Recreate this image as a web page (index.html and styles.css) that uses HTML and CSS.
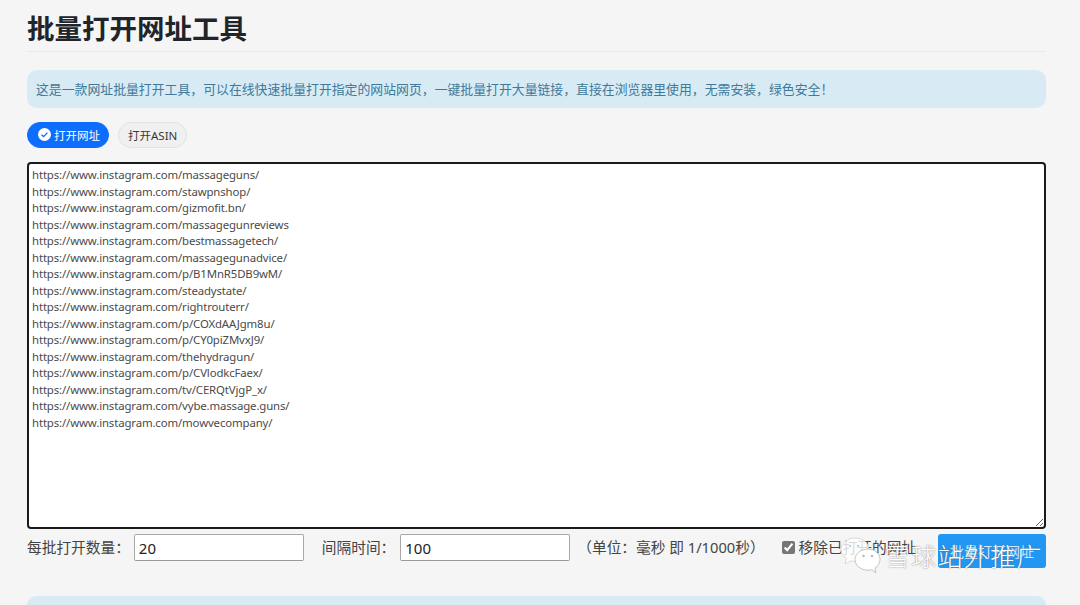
FILE: index.html
```html
<!DOCTYPE html>
<html lang="zh-CN">
<head>
<meta charset="utf-8">
<title>批量打开网址工具</title>
<link rel="stylesheet" href="styles.css">
</head>
<body>
<main class="page">
  <h1 class="title">批量打开网址工具</h1>
  <div class="alert">这是一款网址批量打开工具，可以在线快速批量打开指定的网站网页，一键批量打开大量链接，直接在浏览器里使用，无需安装，绿色安全！</div>
  <div class="tabs">
    <span class="pill pill-active">
      <svg class="check" viewBox="0 0 16 16" width="13" height="13"><circle cx="8" cy="8" r="8" fill="#fff"/><path d="M4.4 8.2l2.5 2.4 4.7-4.9" fill="none" stroke="#0d6efd" stroke-width="1.7"/></svg>
      打开网址
    </span>
    <span class="pill">打开ASIN</span>
  </div>
  <textarea class="urls" spellcheck="false">https://www.instagram.com/massageguns/
https://www.instagram.com/stawpnshop/
https://www.instagram.com/gizmofit.bn/
https://www.instagram.com/massagegunreviews
https://www.instagram.com/bestmassagetech/
https://www.instagram.com/massagegunadvice/
https://www.instagram.com/p/B1MnR5DB9wM/
https://www.instagram.com/steadystate/
https://www.instagram.com/rightrouterr/
https://www.instagram.com/p/COXdAAJgm8u/
https://www.instagram.com/p/CY0piZMvxJ9/
https://www.instagram.com/thehydragun/
https://www.instagram.com/p/CVlodkcFaex/
https://www.instagram.com/tv/CERQtVjgP_x/
https://www.instagram.com/vybe.massage.guns/
https://www.instagram.com/mowvecompany/</textarea>
  <div class="controls">
    <label class="field">每批打开数量：<input class="num num-first" type="text" value="20"></label>
    <label class="field field-gap">间隔时间：<input class="num num-second" type="text" value="100"></label>
    <span class="unit">（单位：毫秒 即 1/1000秒）</span>
    <label class="remove"><input class="tick" type="checkbox" checked>移除已打开的网址</label>
    <button class="go">批量打开网址</button>
  </div>
  <div class="alert alert-bottom"></div>
</main>
<div class="watermark">
  <svg class="wechat" viewBox="0 0 42 37" width="42" height="37">
    <path d="M15 1C7.500 1 1 6 1 12.500c0 3.700 2 6.700 5.200 8.800L5 27l5.800-3.200c1.400.4 2.800.6 4.200.6 7.500 0 14-5.200 14-11.900S22.500 1 15 1z" fill="#fff" fill-opacity=".8" stroke="#d2d2d2" stroke-width=".8"/>
    <path d="M28 12c-7 0-13 4.700-13 10.600s6 10.600 13 10.600c1.300 0 2.500-.2 3.700-.5l4.300 3-1.100-4.600c3.200-1.900 5.100-5 5.100-8.500C40 16.700 35 12 28 12z" fill="#fff" stroke="#bdbdbd" stroke-width=".9"/>
    <circle cx="23.500" cy="19" r="1.300" fill="#bbb"/><circle cx="32" cy="19" r="1.300" fill="#bbb"/>
    <circle cx="10" cy="9" r="1.200" fill="#ccc"/><circle cx="18" cy="9" r="1.200" fill="#ccc"/>
  </svg>
  <span class="wm-text">雪球站外推广</span>
</div>
</body>
</html>
```

FILE: styles.css
```css
* { box-sizing: border-box; }
html, body { margin: 0; height: 605px; overflow: hidden; }
body {
  background: #f5f5f5;
  color: #212529;
  font-family: "Noto Sans", "Noto Sans CJK SC", sans-serif;
  position: relative;
}
.page {
  width: 1019px;
  margin-left: 27px;
  padding-top: 10px;
}
.title {
  margin: 0;
  height: 42px;
  font-size: 27.500px;
  line-height: 38px;
  font-weight: 700;
  color: #212529;
  border-bottom: 1px solid #e9e9e9;
}
.alert {
  margin-top: 18px;
  height: 38px;
  padding: 0 9px;
  background: #d8ebf5;
  border-radius: 10px;
  color: #41799a;
  font-size: 12.870px;
  line-height: 38px;
  white-space: nowrap;
}
.tabs {
  display: flex;
  gap: 9px;
  margin-top: 14px;
}
.pill {
  display: inline-flex;
  align-items: center;
  height: 26px;
  padding: 0 9px;
  border: 1px solid #e2e2e2;
  border-radius: 13px;
  background: #f0f0f0;
  color: #3a3a3a;
  font-size: 11.500px;
}
.pill-active {
  gap: 3px;
  padding: 0 8px 0 10px;
  background: #0d6efd;
  border-color: #0d6efd;
  color: #fff;
}
.check { margin-top: -2px; }
.urls {
  display: block;
  width: 100%;
  height: 367px;
  margin: 14px 0 0;
  padding: 3px;
  background: #fff;
  border: 2px solid #1a1a1a;
  border-radius: 4px;
  color: #4a4a4a;
  font-family: "Noto Sans", "Noto Sans CJK SC", sans-serif;
  font-size: 11.400px;
  letter-spacing: -.13px;
  line-height: 16.500px;
  outline: none;
  overflow: hidden;
}
.controls {
  display: flex;
  align-items: flex-start;
  height: 34px;
  margin-top: 5px;
  color: #444;
  font-size: 14.700px;
  line-height: 27px;
  white-space: nowrap;
}
.field { display: flex; align-items: center; }
.field-gap { margin-left: 18px; }
.num {
  width: 170px;
  height: 27px;
  padding: 0 4px;
  border: 1px solid #a8a8a8;
  border-bottom-color: #999;
  border-radius: 2px;
  background: #fff;
  color: #222;
  font-family: inherit;
  font-size: 15px;
}
.num-first { margin-left: 4px; }
.num-second { margin-left: 5px; }
.unit { margin-left: 7px; }
.remove {
  display: flex;
  align-items: center;
  margin-left: 17px;
}
.tick {
  width: 13px;
  height: 13px;
  margin: 0 4px 0 0;
  accent-color: #767676;
}
.go {
  width: 108px;
  height: 34px;
  margin-left: auto;
  border: 0;
  border-radius: 3px;
  background: #2196f3;
  color: #cfe8fc;
  font-family: inherit;
  font-size: 14px;
}
.alert-bottom {
  margin-top: 28px;
  height: 9px;
  border-radius: 10px 10px 0 0;
}
.watermark {
  position: absolute;
  left: 840px;
  top: 537px;
  display: flex;
  align-items: flex-start;
  gap: 3px;
}
.wm-text {
  margin-top: 2px;
  color: #fff;
  font-size: 25px;
  font-weight: 300;
  line-height: 34px;
  letter-spacing: 1.300px;
  text-shadow: 0 0 1.500px #666;
}
```
